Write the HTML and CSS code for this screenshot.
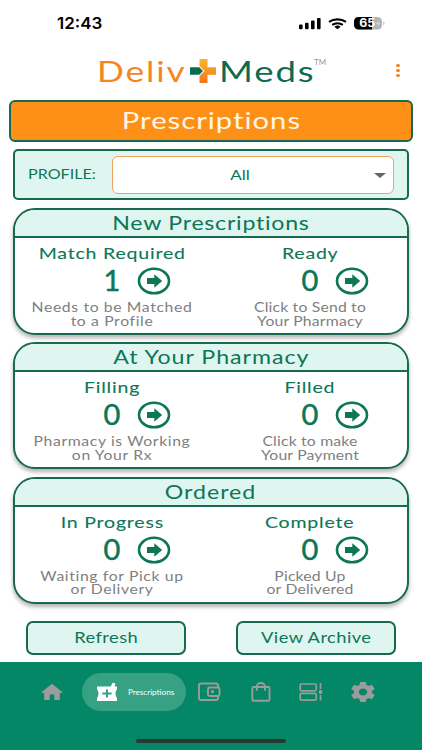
FILE: index.html
```html
<!DOCTYPE html>
<html lang="en">
<head>
<title>Prescriptions</title>
<meta charset="UTF-8">
<meta name="viewport" content="width=device-width, initial-scale=1.0">
<link rel="stylesheet" href="styles.css">
</head>

<body>

<!-- shared icons -->
<svg class="defs" width="0" height="0">
  <symbol id="go" viewBox="0 0 34 28">
    <ellipse cx="17" cy="14" rx="15" ry="12.2" fill="none" stroke="#0c7656" stroke-width="2.6"/>
    <path d="M10 11h7.3V7.2L25.2 14l-7.900 6.800V17H10z" fill="#0c7656"/>
  </symbol>
</svg>

<div class="statusbar">
  <span class="time">12:43</span>
  <svg class="signals" width="90" height="16" viewBox="0 0 90 16">
    <g fill="#000">
      <rect x="2" y="9.6" width="3.6" height="4.6" rx="1"/>
      <rect x="8" y="7.8" width="3.6" height="6.4" rx="1"/>
      <rect x="14" y="5.4" width="3.6" height="8.8" rx="1"/>
      <rect x="20" y="3" width="3.6" height="11.2" rx="1"/>
    </g>
    <g fill="none" stroke="#000" stroke-width="2.1">
      <path d="M32 6.8a12.8 9.5 0 0 1 17 0"/>
      <path d="M35.2 9.9a8 6 0 0 1 10.6 0"/>
    </g>
    <path d="M37.4 11.7a4.5 3.4 0 0 1 6.2 0L40.5 14.3z" fill="#000"/>
    <rect x="57" y="2" width="28" height="12.6" rx="4.5" fill="#b4b4b4"/>
    <path d="M61.5 2H75v12.6H61.5a4.5 4.5 0 0 1-4.5-4.5V6.5A4.5 4.5 0 0 1 61.5 2z" fill="#000"/>
    <path d="M86.3 6.2a2.6 2.6 0 0 1 0 4.2z" fill="#b4b4b4"/>
    <text class="batt" x="62.3" y="12.4" textLength="16" lengthAdjust="spacingAndGlyphs">65</text>
    <path d="M82 5l-3 4h2l-.8 3 3-4h-2z" fill="#dcdcdc"/>
  </svg>
</div>

<header class="brand">
  <span class="word deliv"><b>Deliv</b></span>
  <svg class="cross" width="28" height="26" viewBox="0 0 28 26">
    <defs>
      <linearGradient id="sun" x1="0" y1="0" x2="0" y2="1">
        <stop offset="0" stop-color="#fcb62c"/>
        <stop offset="1" stop-color="#f0761c"/>
      </linearGradient>
    </defs>
    <path d="M10.5 1h8v8.3H27v7.4h-8.5V25h-8v-7l5-5-5-5z" fill="url(#sun)"/>
    <path d="M1 9.3h9.3L14 13l-3.700 3.700H1z" fill="#0c6b50"/>
  </svg>
  <span class="word meds"><b>Meds</b></span>
  <span class="tm">TM</span>
  <span class="more"><i></i><i></i><i></i></span>
</header>

<h1 class="banner"><b class="w">Prescriptions</b></h1>

<div class="profile">
  <label><b class="w">PROFILE:</b></label>
  <div class="select"><b class="w">All</b><i class="caret"></i></div>
</div>

<section class="card">
  <h2><b class="w new">New Prescriptions</b></h2>
  <div class="cols">
    <div class="col">
      <h3><b class="w">Match Required</b></h3>
      <div class="count"><b>1</b><svg><use href="#go"/></svg></div>
      <p><span>Needs to be Matched</span><span>to a Profile</span></p>
    </div>
    <div class="col">
      <h3><b class="w">Ready</b></h3>
      <div class="count"><b>0</b><svg><use href="#go"/></svg></div>
      <p><span>Click to Send to</span><span>Your Pharmacy</span></p>
    </div>
  </div>
</section>

<section class="card">
  <h2><b class="w">At Your Pharmacy</b></h2>
  <div class="cols">
    <div class="col">
      <h3><b class="w">Filling</b></h3>
      <div class="count"><b>0</b><svg><use href="#go"/></svg></div>
      <p><span>Pharmacy is Working</span><span>on Your Rx</span></p>
    </div>
    <div class="col">
      <h3><b class="w">Filled</b></h3>
      <div class="count"><b>0</b><svg><use href="#go"/></svg></div>
      <p><span>Click to make</span><span>Your Payment</span></p>
    </div>
  </div>
</section>

<section class="card">
  <h2><b class="w">Ordered</b></h2>
  <div class="cols">
    <div class="col">
      <h3><b class="w">In Progress</b></h3>
      <div class="count"><b>0</b><svg><use href="#go"/></svg></div>
      <p><span>Waiting for Pick up</span><span>or Delivery</span></p>
    </div>
    <div class="col">
      <h3><b class="w">Complete</b></h3>
      <div class="count"><b>0</b><svg><use href="#go"/></svg></div>
      <p><span>Picked Up</span><span>or Delivered</span></p>
    </div>
  </div>
</section>

<div class="actions">
  <button><b class="w">Refresh</b></button>
  <button><b class="w">View Archive</b></button>
</div>

<nav class="tabbar">
  <div class="tabs">
    <svg class="home" width="24" height="18" viewBox="0 0 24 18"><path d="M12 .8L.8 9.8h3.400V17h5.500v-5.600h4.600V17h5.500V9.800h3.400z" fill="#9c9c9c"/></svg>
    <a class="active">
      <svg width="22" height="20" viewBox="0 0 22 20">
        <path d="M1 4.500h13.800L16.500.8l3 .8-1 2.900H21v2.400c-2 2.600-2 6.500 0 9.400V19H1v-2.700c2-2.900 2-6.800 0-9.400z" fill="#fff"/>
        <path d="M11 7.400v8.200M6.400 11.500h9.200" stroke="#37a184" stroke-width="2"/>
      </svg>
      <span>Prescriptions</span>
    </a>
    <svg class="wallet" width="24" height="20" viewBox="0 0 24 20" fill="none" stroke="#9c9c9c" stroke-width="1.9">
      <path d="M21 5.500V3.200Q21 1.500 19 1.500H4Q2 1.500 2 3.200v13.100Q2 18 4 18h15q2 0 2-1.700V14"/>
      <rect x="11" y="5.500" width="11.500" height="8.500" rx="1.500"/>
      <circle cx="15.500" cy="9.700" r="1.600" fill="#9c9c9c" stroke="none"/>
    </svg>
    <svg class="bag" width="20" height="20" viewBox="0 0 20 20" fill="none" stroke="#9c9c9c" stroke-width="1.9">
      <rect x="1.300" y="5" width="17.200" height="13.800" rx="1.300"/>
      <path d="M5.800 8.800V5a4.100 4 0 0 1 8.200 0v3.800"/>
    </svg>
    <svg class="rows" width="24" height="20" viewBox="0 0 24 20" fill="none" stroke="#9c9c9c" stroke-width="1.7">
      <rect x="1.200" y="2" width="16" height="6.800" rx="1.200"/>
      <rect x="1.200" y="11.300" width="16" height="6.800" rx="1.200"/>
      <path d="M21.500 1v6M21.500 13v5.500"/>
      <circle cx="21.500" cy="10" r="1.900" fill="#9c9c9c" stroke="none"/>
    </svg>
    <svg class="gear" width="24" height="20" viewBox="2 2 20 20" preserveAspectRatio="none"><path fill="#9c9c9c" d="M19.430 12.980c.04-.32.070-.64.070-.98s-.03-.66-.07-.98l2.110-1.650c.19-.15.240-.42.120-.64l-2-3.460c-.12-.22-.39-.3-.61-.22l-2.490 1c-.52-.4-1.080-.73-1.690-.98l-.38-2.650C14.460 2.180 14.250 2 14 2h-4c-.25 0-.46.18-.49.42l-.38 2.650c-.61.25-1.170.59-1.690.98l-2.490-1c-.23-.09-.49 0-.61.22l-2 3.460c-.13.22-.07.49.12.64l2.110 1.650c-.04.320-.07.650-.07.980s.03.660.07.980l-2.110 1.650c-.19.150-.24.420-.12.640l2 3.460c.12.220.39.300.61.220l2.490-1c.52.400 1.080.730 1.690.980l.38 2.650c.03.240.24.420.49.420h4c.25 0 .46-.18.490-.42l.38-2.650c.61-.25 1.170-.59 1.690-.98l2.490 1c.23.090.49 0 .61-.22l2-3.460c.12-.22.070-.49-.12-.64l-2.110-1.650zM12 15.500c-1.930 0-3.500-1.570-3.500-3.500s1.570-3.500 3.500-3.500 3.500 1.570 3.500 3.500-1.570 3.500-3.500 3.500z"/></svg>
  </div>
  <div class="homebar"></div>
</nav>

</body>
</html>
```
FILE: styles.css
```css
html,body{
  margin:0;
  padding:0;
  height:100%;
}
body {
  --green: #0c7656;
  --line: #17694f;
  --mint: #dff5ef;
  display:flex;
  flex-direction:column;
  width:422px;
  height:750px;
  overflow:hidden;
  background:#fff;
  color:var(--green);
  font-family: Lato, "Open Sans", sans-serif;
}
*{ box-sizing:border-box; }
b { font-weight:400; }
h1,h2,h3,p { margin:0; font-weight:400; }
.defs { position:absolute; }

/* wide lettering used for all headings and labels */
.w {
  display:inline-block;
  white-space:nowrap;
  transform:scaleX(1.22);
}

.statusbar {
  display:flex;
  justify-content:space-between;
  height:50px;
  padding:15px 35px 0 57px;
}
.time {
  color:#000;
  font:600 16px/17px Inter, sans-serif;
  transform:scaleX(1.06);
  transform-origin:left;
}
.batt {
  fill:#fff;
  font:700 11.5px Inter, sans-serif;
}

.brand {
  display:flex;
  height:50px;
  padding-left:97px;
}
.word {
  height:40px;
  font-size:29px;
  line-height:42px;
}
.word b {
  display:inline-block;
  transform:scaleX(1.22);
  transform-origin:left;
  letter-spacing:1.5px;
}
.deliv { width:92px; color:#f5861f; }
.meds { width:97px; color:#0c6b50; padding-left:2px; }
.meds b { transform:scaleX(1.26); }
.cross { margin-top:8px; }
.tm {
  width:14px;
  margin-top:7px;
  color:#999;
  font-size:8px;
  line-height:10px;
}
.more {
  display:flex;
  flex-direction:column;
  gap:1.5px;
  margin:14px 0 0 68px;
}
.more i {
  width:3.6px;
  height:3.4px;
  border-radius:50%;
  background:#f5861f;
}

.banner {
  height:42px;
  margin:0 9px;
  border:2px solid var(--line);
  border-radius:6px;
  background:#ff9017;
  color:#fff6e4;
  font-size:24px;
  line-height:36px;
  text-align:center;
}
.banner .w { letter-spacing:.8px; }

.profile {
  display:flex;
  height:51px;
  margin:7px 13px 0;
  padding:5px 13px 0;
  border:2px solid var(--line);
  border-radius:5px;
  background:var(--mint);
}
.profile label {
  width:84px;
  font-size:14px;
  line-height:36px;
}
.profile label .w {
  transform:scaleX(1.15);
  transform-origin:left;
}
.select {
  position:relative;
  width:283px;
  height:38px;
  border:1px solid #f3a25c;
  border-radius:6px;
  background:#fff;
  font-size:14px;
  line-height:36px;
  text-align:center;
}
.select .w { margin-right:26px; }
.caret {
  position:absolute;
  right:7px;
  top:16px;
  border:6px solid transparent;
  border-top:5px solid #666;
  border-bottom:0;
}

.card {
  height:127px;
  margin:8px 13px 0;
  border:2px solid var(--line);
  border-radius:22px;
  overflow:hidden;
  background:#fff;
  box-shadow:0 3px 4px rgba(0,0,0,.3);
}
.card + .card { margin-top:7.4px; }
.card h2 {
  height:28px;
  border-bottom:2px solid var(--line);
  background:var(--mint);
  font-size:19px;
  line-height:25px;
  text-align:center;
}
.card h2 .w { letter-spacing:.8px; }
.card h2 .new { letter-spacing:.6px; }
.cols {
  display:grid;
  grid-template-columns:194px 202px;
}
.col { text-align:center; }
.card h3 {
  height:25px;
  padding-top:5px;
  font-size:16px;
  line-height:20px;
  -webkit-text-stroke:.1px;
}
.card h3 .w { letter-spacing:.65px; }
.count {
  display:grid;
  grid-template-columns:1fr 20px 1fr;
  height:31px;
}
.count b {
  grid-column:2;
  font-size:29px;
  line-height:33px;
  -webkit-text-stroke:.5px;
}
.count svg {
  width:34px;
  height:28px;
  margin:4px 0 0 15px;
}
.col p {
  padding-top:7px;
  color:#808080;
  font-size:12.6px;
  line-height:13.6px;
}
.col p span {
  display:block;
  transform:scaleX(1.25);
  letter-spacing:.5px;
}
.col:last-child p span { letter-spacing:.15px; }

.actions {
  display:flex;
  justify-content:space-between;
  margin:17px 26px 0;
}
.actions button {
  width:160px;
  height:34px;
  padding:0 0 2px;
  border:2px solid var(--line);
  border-radius:7px;
  background:var(--mint);
  color:var(--green);
  font:15px Lato, sans-serif;
}
.actions .w { letter-spacing:.35px; }

.tabbar {
  height:88px;
  margin-top:auto;
  background:#038766;
}
.tabs {
  display:flex;
  align-items:center;
  height:38px;
  margin-top:11px;
  padding-left:40px;
}
.active {
  display:flex;
  align-items:center;
  width:104px;
  height:38px;
  margin:0 11px 0 18px;
  padding-left:14px;
  border-radius:19px;
  background:#37a184;
  color:#fff;
  font-size:8.1px;
}
.active span { margin-left:10px; white-space:nowrap; }
.bag { margin-left:30px; }
.rows { margin-left:28px; }
.gear { margin-left:28px; }
.homebar {
  width:150px;
  height:4px;
  margin:28px auto 0;
  border-radius:2px;
  background:#2b3733;
}
```
